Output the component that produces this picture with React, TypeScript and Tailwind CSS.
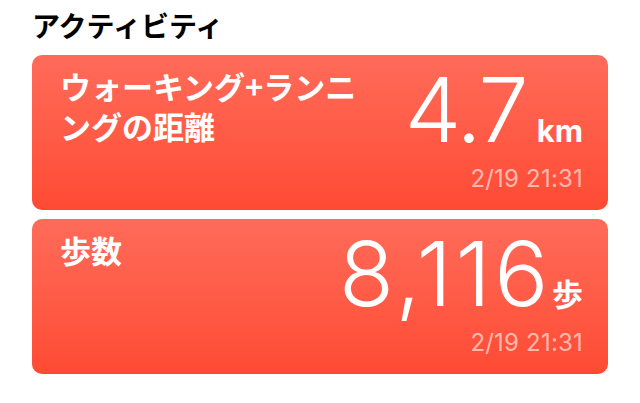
const jp = '"Noto Sans CJK JP", sans-serif';
const num = 'Inter, "Noto Sans CJK JP", sans-serif';

type Metric = {
  label: string;
  value: string;
  unit: string;
  date: string;
  labelWidth: string;
  tracking: string;
  gap: string;
};

const metrics: Metric[] = [
  {
    label: 'ウォーキング+ランニングの距離',
    value: '4.7',
    unit: 'km',
    date: '2/19 21:31',
    labelWidth: 'w-[315px]',
    tracking: 'tracking-[-2px]',
    gap: 'gap-[10px]',
  },
  {
    label: '歩数',
    value: '8,116',
    unit: '歩',
    date: '2/19 21:31',
    labelWidth: 'w-[200px]',
    tracking: 'tracking-[3.5px]',
    gap: 'gap-[0px]',
  },
];

function MetricCard({ m }: { m: Metric }) {
  return (
    <div className="flex h-[155px] justify-between rounded-[10px] bg-gradient-to-b from-[#ff6b59] to-[#ff4a33] pl-[28px] pr-[25px] text-white">
      <div
        className={`${m.labelWidth} pt-[11px] text-[31px] font-bold leading-[40px]`}
        style={{ fontFamily: jp }}
      >
        {m.label}
      </div>
      <div className="flex flex-col items-end">
        <div className={`mt-[5px] flex items-baseline ${m.gap}`}>
          <span className={`text-[90px] font-light leading-[100px] ${m.tracking}`} style={{ fontFamily: num }}>
            {m.value}
          </span>
          <span className="text-[31px] font-bold" style={{ fontFamily: num }}>
            {m.unit}
          </span>
        </div>
        <div className="mt-[5px] text-[24px] leading-[28px] tracking-[0.2px] text-white/60" style={{ fontFamily: num }}>
          {m.date}
        </div>
      </div>
    </div>
  );
}

export default function App() {
  return (
    <div className="min-h-[403px] bg-white px-[32px] pt-[6px]">
      <h1 className="text-[28px] font-bold leading-[38px] text-black" style={{ fontFamily: jp }}>
        アクティビティ
      </h1>
      <div className="mt-[11px] flex flex-col gap-[9px]">
        {metrics.map((m) => (
          <MetricCard key={m.unit} m={m} />
        ))}
      </div>
    </div>
  );
}
